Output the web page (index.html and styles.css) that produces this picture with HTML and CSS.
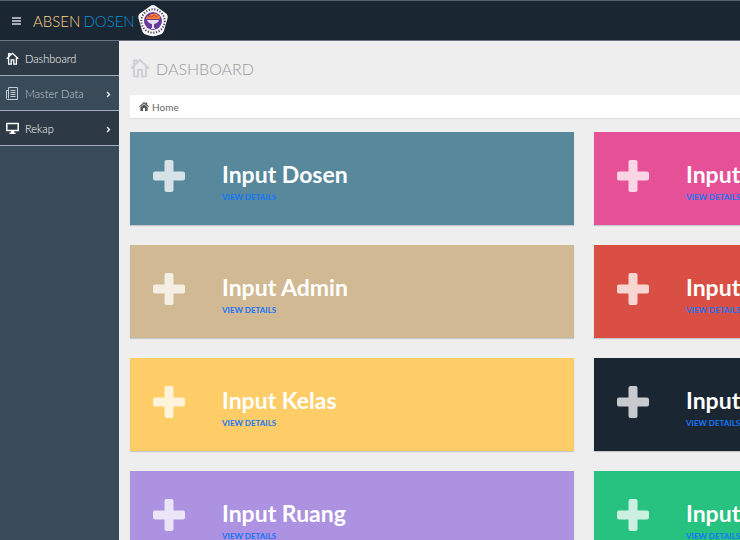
FILE: index.html
```html
<!DOCTYPE html>
<html lang="id">
<head>
<meta charset="utf-8">
<meta name="viewport" content="width=device-width, initial-scale=1">
<title>Absen Dosen</title>
<link rel="stylesheet" href="styles.css">
</head>
<body>
<svg class="defs" aria-hidden="true">
  <symbol id="house" viewBox="0 0 20 20"><path d="M1 10.500 10 2l9 8.500M4 8.500V18.500h4V12h4v6.500h4V8.500M4 7V2.500h2.500V5" fill="none" stroke="currentColor"/></symbol>
  <symbol id="plus" viewBox="0 0 32 32"><path d="M13.500 0h5a2 2 0 0 1 2 2v9.500H30a2 2 0 0 1 2 2v5a2 2 0 0 1-2 2h-9.500V30a2 2 0 0 1-2 2h-5a2 2 0 0 1-2-2v-9.500H2a2 2 0 0 1-2-2v-5a2 2 0 0 1 2-2h9.500V2a2 2 0 0 1 2-2z" fill="currentColor"/></symbol>
  <symbol id="chevron" viewBox="0 0 5 8"><path d="M1 1l2.500 2.500L1 6" fill="none" stroke="currentColor" stroke-width="1.300"/></symbol>
</svg>
<header class="topbar">
  <button class="toggle" type="button" aria-label="Menu">
    <svg viewBox="0 0 9 8"><path d="M0 1h9M0 4h9M0 7h9" stroke="currentColor" stroke-width="1.500"/></svg>
  </button>
  <a class="brand" href="#"><span class="brand-first">ABSEN</span> <span class="brand-second">DOSEN</span></a>
  <svg class="crest" viewBox="0 0 32 34" aria-hidden="true">
    <path d="M13 2.200Q16 0 19 2.200L28.500 9Q31.500 11 30.500 14.500L27 26.500Q26 30 22.500 30.800Q16 33.500 9.500 30.800Q6 30 5 26.500L1.500 14.500Q.5 11 3.500 9z" fill="#f7f5fa"/>
    <circle cx="16" cy="17" r="11.700" fill="none" stroke="#55525b" stroke-width="2" stroke-dasharray="1.300 1.500"/>
    <circle cx="16" cy="17" r="9" fill="#673a9b"/>
    <path d="M9 15q0-3 3-3 1-3 4-2 3-2 5 1 3 1 2 4z" fill="#ee7b36"/>
    <path d="M11 13l2-1 2 1 2-2 3 2" fill="none" stroke="#d93d46"/>
    <path d="M10 16h12q-1 3-5 4v4h1v1h-4v-1h1v-4q-4-1-5-4z" fill="#e9def2"/>
  </svg>
</header>
<div class="shell">
  <nav class="sidebar">
    <a class="item" href="#"><svg class="item-icon bold" viewBox="0 0 20 20"><use href="#house"/></svg>Dashboard</a>
    <a class="item current" href="#">
      <svg class="item-icon" viewBox="0 0 13 13"><path d="M2.500.5h9v12h-10q-1 0-1-1v-8h2zM2.500 3.500v8M4.500 3.500h5M4.500 5.500h5M4.500 7.500h5M4.500 9.500h5" fill="none" stroke="currentColor"/></svg>Master Data
      <svg class="arrow" viewBox="0 0 5 8"><use href="#chevron"/></svg></a>
    <a class="item" href="#">
      <svg class="item-icon" viewBox="0 0 13 13"><path d="M.8 1.500h11.400v7H.8z" fill="none" stroke="currentColor" stroke-width="1.500"/><path d="M5 9h3v1.500h1.500V12h-6v-1.500H5z" fill="currentColor"/></svg>Rekap
      <svg class="arrow" viewBox="0 0 5 8"><use href="#chevron"/></svg></a>
  </nav>
  <main class="content">
    <h1 class="title"><svg class="title-icon" viewBox="0 0 20 20"><use href="#house"/></svg>DASHBOARD</h1>
    <div class="crumbs">
      <svg class="crumb-icon" viewBox="0 0 10 9"><path d="M5 0l1.800 1.600V.5h1.400v2.300L10 4.500l-.6.700L5 1.500.6 5.200 0 4.500z" fill="currentColor"/><path d="M5 2.300l3.600 3V9H6V6H4v3H1.400V5.300z" fill="currentColor"/></svg>
      <a href="#">Home</a>
    </div>
    <div class="cards">
      <section class="card teal"><svg class="plus" viewBox="0 0 32 32"><use href="#plus"/></svg><div class="card-text"><h2>Input Dosen</h2><a href="#">VIEW DETAILS</a></div></section>
      <section class="card pink"><svg class="plus" viewBox="0 0 32 32"><use href="#plus"/></svg><div class="card-text"><h2>Input</h2><a href="#">VIEW DETAILS</a></div></section>
      <section class="card tan"><svg class="plus" viewBox="0 0 32 32"><use href="#plus"/></svg><div class="card-text"><h2>Input Admin</h2><a href="#">VIEW DETAILS</a></div></section>
      <section class="card red"><svg class="plus" viewBox="0 0 32 32"><use href="#plus"/></svg><div class="card-text"><h2>Input</h2><a href="#">VIEW DETAILS</a></div></section>
      <section class="card yellow"><svg class="plus" viewBox="0 0 32 32"><use href="#plus"/></svg><div class="card-text"><h2>Input Kelas</h2><a href="#">VIEW DETAILS</a></div></section>
      <section class="card navy"><svg class="plus" viewBox="0 0 32 32"><use href="#plus"/></svg><div class="card-text"><h2>Input</h2><a href="#">VIEW DETAILS</a></div></section>
      <section class="card purple"><svg class="plus" viewBox="0 0 32 32"><use href="#plus"/></svg><div class="card-text"><h2>Input Ruang</h2><a href="#">VIEW DETAILS</a></div></section>
      <section class="card green"><svg class="plus" viewBox="0 0 32 32"><use href="#plus"/></svg><div class="card-text"><h2>Input</h2><a href="#">VIEW DETAILS</a></div></section>
    </div>
  </main>
</div>
</body>
</html>
```
FILE: styles.css
```css
* { box-sizing: border-box; }

body {
  display: flex;
  flex-direction: column;
  height: 100vh;
  margin: 0;
  overflow: hidden;
  background: #eeeeee;
  font-family: Lato, "Liberation Sans", sans-serif;
}

a { color: inherit; text-decoration: none; }
svg { display: block; flex: none; }
.defs { position: absolute; width: 0; height: 0; }

.topbar {
  display: flex;
  flex: none;
  align-items: center;
  height: 41px;
  padding-left: 12px;
  background: #1a2732;
  border-top: 1px solid #56616c;
  border-bottom: 1px solid #6b7480;
}

.toggle {
  width: 9px;
  margin-right: 12px;
  padding: 0;
  border: 0;
  background: none;
  color: #d5d9dc;
}

.brand { display: flex; gap: 3px; font-size: 15px; font-weight: 300; line-height: 20px; white-space: nowrap; }
.brand-first { color: #fed189; }
.brand-second { color: #0a8fd8; }
.crest { width: 32px; height: 34px; margin-left: 2px; }

.shell { display: flex; flex: 1; min-height: 0; }

.sidebar { flex: none; width: 119px; background: #394a59; }

.item {
  display: flex;
  align-items: center;
  height: 35px;
  padding: 0 8px 0 6px;
  border-bottom: 1px solid #a4adb7;
  background: #2d3945;
  color: #ffffff;
  font-size: 11px;
  font-weight: 300;
}

.current { background: #394a59; color: #c4ccd4; }
.item-icon { width: 13px; height: 13px; margin-right: 6px; }
.bold { stroke-width: 2; }
.arrow { width: 5px; height: 8px; margin: 4px 0 0 auto; color: #ffffff; }

.content { flex: 1; min-width: 0; padding: 16px 0 0 11px; overflow: hidden; }

.title {
  display: flex;
  align-items: center;
  height: 22px;
  margin: 0 0 16px;
  color: #9b9b9d;
  font-size: 16px;
  font-weight: 300;
}

.title-icon { width: 20px; height: 20px; margin-right: 6px; stroke-width: 2; color: #cfd1d5; }

.crumbs {
  display: flex;
  align-items: center;
  height: 24px;
  margin-bottom: 13px;
  padding-left: 9px;
  border-bottom: 1px solid #dddddd;
  background: #ffffff;
  color: #666666;
  font-size: 10px;
}

.crumb-icon { width: 10px; height: 9px; margin-right: 3px; color: #555555; }

.cards {
  display: grid;
  grid-template-columns: repeat(2, minmax(444px, 1fr));
  grid-auto-rows: 93px;
  gap: 20px;
}

.card {
  display: flex;
  align-items: center;
  padding-left: 23px;
  box-shadow: 0 1px 1px #c5c7cc;
  color: #ffffff;
}

.plus { width: 32px; height: 32px; margin: 0 37px 5px 0; color: rgba(255, 255, 255, .76); }
.card-text { padding-top: 8px; }
.card h2 { margin: 0; font-size: 23px; font-weight: 700; line-height: 28px; }
.card a { display: block; color: #1675f8; font-size: 8px; font-weight: 700; line-height: 18px; }

.teal { background: #57889c; }
.pink { background: #e65097; }
.tan { background: #d1b993; }
.red { background: #da4f43; }
.yellow { background: #fecd67; }
.navy { background: #1a2732; }
.purple { background: #ac92e0; }
.green { background: #27c280; }
```
